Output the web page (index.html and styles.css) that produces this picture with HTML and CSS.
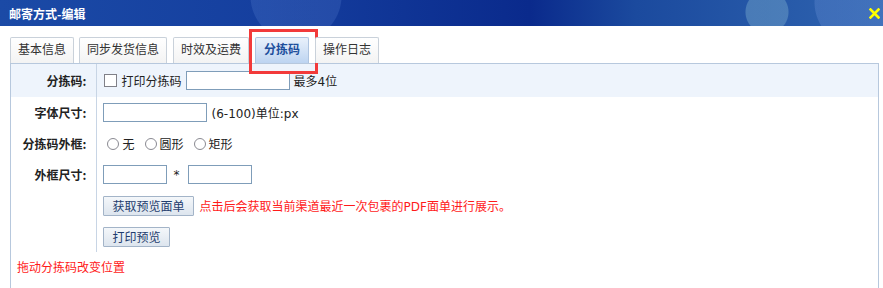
FILE: index.html
```html
<!DOCTYPE html>
<html lang="zh-CN">
<head>
    <meta charset="UTF-8">
    <title>邮寄方式-编辑</title>
    <link rel="stylesheet" href="styles.css">
</head>
<body>
    <div class="titlebar">
        <span class="title">邮寄方式-编辑</span>
        <svg class="close" width="11" height="11" viewBox="0 0 11 11">
            <path d="M1.5 1.5 L9.5 9.5 M9.5 1.5 L1.5 9.5" stroke="#ffff00" stroke-width="2.6" stroke-linecap="square"/>
        </svg>
    </div>

    <div class="tabs">
        <div class="tab">基本信息</div>
        <div class="tab">同步发货信息</div>
        <div class="tab">时效及运费</div>
        <div class="tab active">分拣码<span class="mark"></span></div>
        <div class="tab">操作日志</div>
    </div>

    <div class="panel">
        <table class="form">
            <tr class="first">
                <th>分拣码:</th>
                <td>
                    <div class="line">
                        <label class="check"><span class="box"></span>打印分拣码</label>
                        <input type="text" class="code">
                        <span>最多4位</span>
                    </div>
                </td>
            </tr>
            <tr>
                <th>字体尺寸:</th>
                <td>
                    <div class="line">
                        <input type="text" class="size">
                        <span class="unit">(6-100)单位:px</span>
                    </div>
                </td>
            </tr>
            <tr>
                <th>分拣码外框:</th>
                <td>
                    <div class="line radios">
                        <label><span class="radio"></span>无</label>
                        <label><span class="radio"></span>圆形</label>
                        <label><span class="radio"></span>矩形</label>
                    </div>
                </td>
            </tr>
            <tr>
                <th>外框尺寸:</th>
                <td>
                    <div class="line">
                        <input type="text" class="frame">
                        <span class="star">*</span>
                        <input type="text" class="frame">
                    </div>
                </td>
            </tr>
            <tr>
                <th></th>
                <td>
                    <div class="line">
                        <button>获取预览面单</button>
                        <span class="tip">点击后会获取当前渠道最近一次包裹的PDF面单进行展示。</span>
                    </div>
                </td>
            </tr>
            <tr>
                <th></th>
                <td>
                    <div class="line"><button>打印预览</button></div>
                </td>
            </tr>
        </table>
        <div class="hint">拖动分拣码改变位置</div>
    </div>
</body>
</html>
```

FILE: styles.css
```css
body {
    margin: 0;
    font-family: "DejaVu Sans", "Noto Sans CJK SC", sans-serif;
    font-size: 12px;
    color: #222;
    background: #fff;
    overflow: hidden;
}
.titlebar {
    height: 26px;
    display: flex;
    align-items: center;
    justify-content: space-between;
    padding: 0 3px 0 9px;
    background:
        radial-gradient(circle at 296px -4px, rgba(90, 130, 210, 0.25) 0, rgba(90, 130, 210, 0.25) 45px, transparent 46px),
        radial-gradient(circle at 767px 12px, rgba(110, 160, 200, 0.5) 0, rgba(110, 160, 200, 0.5) 21px, transparent 22px),
        radial-gradient(circle at 860px 2px, rgba(100, 140, 210, 0.35) 0, rgba(100, 140, 210, 0.35) 45px, transparent 46px),
        radial-gradient(ellipse at 455px 30px, rgba(60, 110, 200, 0.5) 0, transparent 40px),
        linear-gradient(to right, #1b4aa6 0%, #153f9f 30%, #0a2a8c 60%, #1b4a9e 72%, #2f64b0 100%);
}
.title {
    color: #fff;
    font-weight: bold;
    font-family: "Noto Sans CJK SC", sans-serif;
}
.close {
    display: block;
}
.tabs {
    display: flex;
    gap: 6px;
    padding: 11px 0 0 10px;
}
.tab {
    position: relative;
    height: 25px;
    line-height: 25px;
    padding: 0 7px;
    border: 1px solid #c9d1da;
    border-bottom: none;
    border-radius: 2px 2px 0 0;
    background: linear-gradient(#ffffff, #f3f3f3);
    color: #333;
}
.tab:first-child {
    margin-right: -1px;
}
.tab.active {
    padding: 0 8px;
    color: #1d4f9c;
    font-weight: bold;
    background: linear-gradient(#e9f1fb, #bdd4f1);
    border-color: #aec4e0;
}
.mark {
    position: absolute;
    left: -7px;
    top: -9px;
    width: 63px;
    height: 39px;
    border: 3px solid #f23a3a;
}
.panel {
    margin: 0 4px 0 10px;
    border: 1px solid #b7c8dd;
    border-bottom: none;
    height: 230px;
}
.form {
    border-collapse: collapse;
}
.form tr.first {
    background: #eef4fc;
}
.form th {
    width: 86px;
    height: 31px;
    padding: 0 10px 0 0;
    text-align: right;
    font-weight: bold;
    white-space: nowrap;
    border-right: 1px solid #c8d5e5;
    box-sizing: border-box;
    font-family: "Noto Sans CJK SC", sans-serif;
}
.form tr.first th,
.form tr.first td {
    height: 33px;
}
.form td {
    padding: 0 0 0 6px;
    width: 775px;
    white-space: nowrap;
}
.line {
    display: flex;
    align-items: center;
}
input[type="text"] {
    height: 19px;
    border: 1px solid #7f9db9;
    padding: 0 2px;
    box-sizing: border-box;
    margin: 0;
    font: inherit;
}
.code {
    width: 104px;
    margin: 0 4px 0 4px !important;
}
.size {
    width: 104px;
    margin-right: 4px !important;
}
.frame {
    width: 64px;
}
.star {
    width: 21px;
    padding-left: 6px;
    box-sizing: border-box;
}
.check {
    display: flex;
    align-items: center;
    padding-left: 1px;
}
.box {
    width: 11px;
    height: 11px;
    border: 1px solid #808088;
    background: #fff;
    margin-right: 4px;
}
.radios {
    padding-left: 4px;
}
.radios label {
    display: flex;
    align-items: center;
    margin-right: 10px;
}
.radio {
    width: 10px;
    height: 10px;
    border: 1px solid #8a8a92;
    border-radius: 50%;
    background: #fff;
    margin-right: 3px;
}
button {
    height: 20px;
    padding: 0 8px;
    border: 1px solid #a3b4c8;
    border-radius: 1px;
    background: linear-gradient(#f4f7fa, #dde5ee);
    color: #1f3d6e;
    font-family: "Noto Sans CJK SC", sans-serif;
    font-size: 12px;
    margin: 0;
}
.tip {
    color: #ff1a1a;
    margin-left: 6px;
}
.hint {
    color: #ff1a1a;
    padding: 6px 0 0 6px;
}
```
